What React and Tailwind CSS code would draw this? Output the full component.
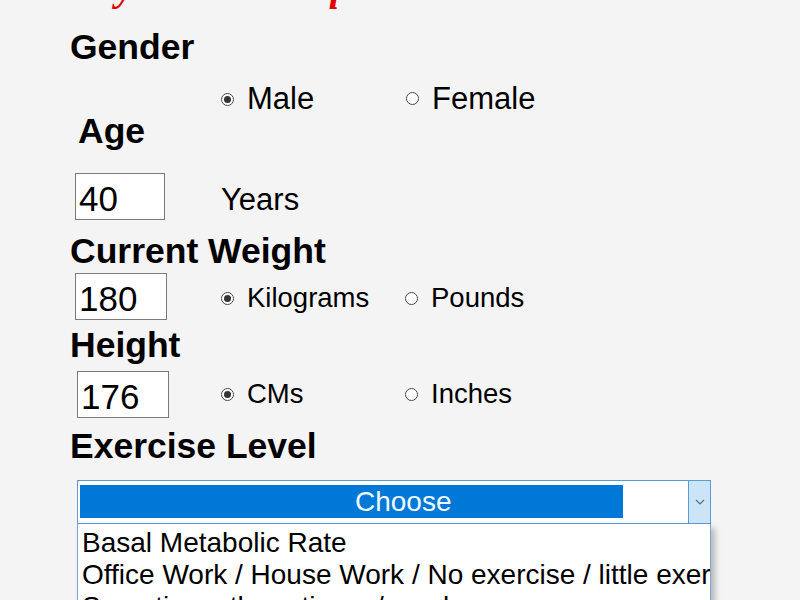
const Radio = ({ checked, label, className = '' }) => (
  <div className={`flex items-center gap-[13px] ${className}`}>
    <span className="flex h-[13px] w-[13px] shrink-0 items-center justify-center rounded-full border border-[#4a4a4a] bg-white">
      {checked && <span className="h-[7px] w-[7px] rounded-full bg-[#333]" />}
    </span>
    <span>{label}</span>
  </div>
);

const Box = ({ value, className = '' }) => (
  <div
    className={`box-border h-[47px] w-[90px] shrink-0 border border-[#7a7a7a] bg-white pl-[3px] pt-[5px] text-[35px] leading-[40px] ${className}`}
  >
    {value}
  </div>
);

const Heading = ({ children, className = '' }) => (
  <h2 className={`text-[35.5px] font-bold leading-[42px] ${className}`}>{children}</h2>
);

const App = () => {
  return (
    <div
      className="flex h-[600px] w-[800px] flex-col overflow-hidden bg-[#f4f4f4] px-[70px] text-black"
      style={{ fontFamily: '"Liberation Sans", Arial, sans-serif' }}
    >
      <h1
        className="-ml-[25px] -mt-[37px] whitespace-nowrap text-[40px] font-bold italic leading-[48px] text-[#e30000]"
        style={{ fontFamily: '"Liberation Serif", "Times New Roman", serif' }}
      >
        Daily Calorie Requirements
      </h1>

      <Heading className="mt-[15px]">Gender</Heading>
      <div className="ml-[151px] mt-[16px] flex text-[31px] leading-[30px]">
        <Radio checked label="Male" className="w-[185px]" />
        <Radio label="Female" className="-mt-[1px]" />
      </div>

      <Heading className="-mt-[4px] ml-[8px] leading-[34px]">Age</Heading>
      <div className="mt-[21px] flex items-start">
        <Box value="40" className="ml-[5px]" />
        <span className="ml-[56px] mt-[10px] text-[31px] leading-[34px]">Years</span>
      </div>

      <Heading className="mt-[10px]">Current Weight</Heading>
      <div className="mt-[1px] flex items-start">
        <Box value="180" className="ml-[5px] h-[44px] w-[92px]" />
        <div className="ml-[54px] mt-[10px] flex text-[27.5px] leading-[30px]">
          <Radio checked label="Kilograms" className="w-[184px]" />
          <Radio label="Pounds" />
        </div>
      </div>

      <Heading className="mt-[4px]">Height</Heading>
      <div className="mt-[5px] flex items-start">
        <Box value="176" className="ml-[7px] h-[46px] w-[92px]" />
        <div className="ml-[52px] mt-[8px] flex text-[27.5px] leading-[30px]">
          <Radio checked label="CMs" className="w-[184px]" />
          <Radio label="Inches" />
        </div>
      </div>

      <Heading className="mt-[7px]">Exercise Level</Heading>

      <div className="ml-[7px] mt-[13px] w-[634px]">
        <div className="box-border flex h-[44px] border border-[#5b9bd5] bg-white">
          <div className="flex-1 pl-[2px] pt-[4px]">
            <div className="h-[33px] w-[543px] bg-[#0078d7] pl-[275px] text-[28px] leading-[33px] text-[#f2f8ff]">
              Choose
            </div>
          </div>
          <div className="flex w-[22px] items-center justify-center border-l border-[#5b9bd5] bg-[#cce4f7]">
            <svg width="10" height="7" viewBox="0 0 10 7" fill="none">
              <path d="M1 1 L5 5 L9 1" stroke="#5a6e80" strokeWidth="1.2" />
            </svg>
          </div>
        </div>
        <ul className="h-[120px] overflow-hidden whitespace-nowrap border border-t-0 border-[#7aa7d6] bg-white pl-[4px] pt-[3px] text-[28px] leading-[32px] shadow-[4px_4px_6px_rgba(0,0,0,0.25)]">
          <li>Basal Metabolic Rate</li>
          <li>Office Work / House Work / No exercise / little exercise</li>
          <li>Sometimes three times / week</li>
        </ul>
      </div>
    </div>
  );
};

export default App;
